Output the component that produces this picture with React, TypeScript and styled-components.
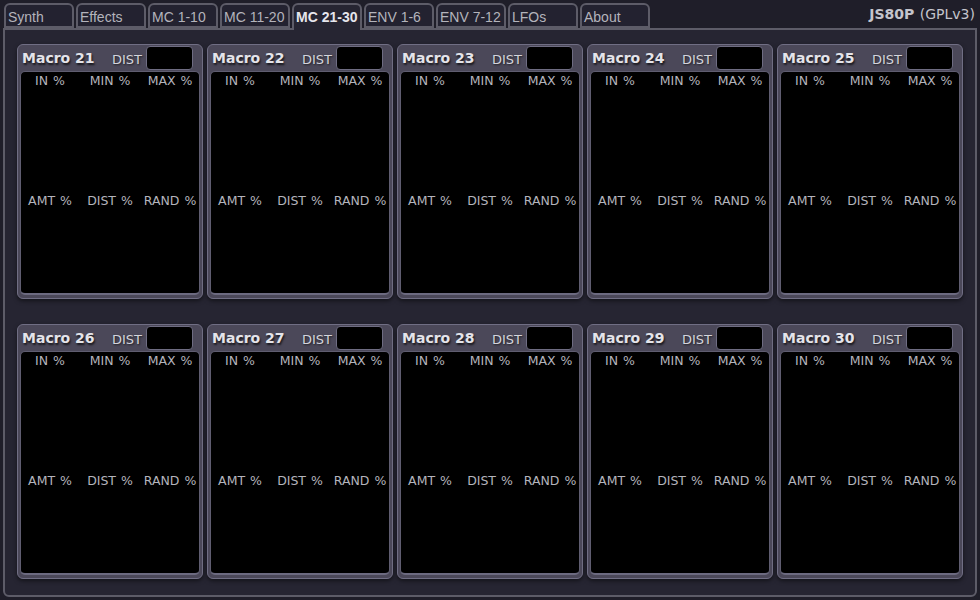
import React from "react";
import styled, { createGlobalStyle } from "styled-components";

const Global = createGlobalStyle`
  html, body { margin: 0; padding: 0; background: #1f1e29; }
  body { width: 980px; height: 600px; overflow: hidden; }
`;

const Root = styled.div`
  width: 980px;
  height: 600px;
  display: flex;
  flex-direction: column;
  background: #1f1e29;
  font-family: "DejaVu Sans", Verdana, sans-serif;
`;

const TopBar = styled.div`
  display: flex;
  align-items: flex-end;
  justify-content: space-between;
  height: 28px;
  padding: 3px 0 0 4px;
  box-sizing: border-box;
`;

const Tabs = styled.div`
  display: flex;
  gap: 2px;
  height: 25px;
`;

const Tab = styled.div<{ $active?: boolean }>`
  width: 70px;
  height: ${(p) => (p.$active ? "27px" : "25px")};
  box-sizing: border-box;
  border: 2px solid #5d5c68;
  border-bottom: ${(p) => (p.$active ? "none" : "2px solid #5d5c68")};
  border-radius: 6px 6px 0 0;
  background: ${(p) => (p.$active ? "#262532" : "#232230")};
  color: ${(p) => (p.$active ? "#e6e6ec" : "#b4b4bc")};
  font-family: "Liberation Sans", Arial, sans-serif;
  font-size: 14px;
  font-weight: ${(p) => (p.$active ? "bold" : "normal")};
  padding: 4px 0 0 2px;
  line-height: 16px;
  white-space: nowrap;
  position: relative;
  z-index: ${(p) => (p.$active ? 2 : 0)};
`;

const Brand = styled.div`
  font-family: "DejaVu Sans", Verdana, sans-serif;
  font-size: 14px;
  color: #c4c4cc;
  padding: 0 5px 0 0;
  align-self: flex-start;
  margin-top: 3px;
  word-spacing: 1px;
  b { font-weight: bold; }
`;

const Panel = styled.div`
  margin: 0 3px 3px 3px;
  flex: 1;
  border: 2px solid #5d5c68;
  border-radius: 0 0 6px 6px;
  background: #262532;
  padding: 14px 12px 0 12px;
  display: grid;
  grid-template-columns: repeat(5, 186px);
  grid-template-rows: 255px 255px;
  column-gap: 4px;
  row-gap: 25px;
  align-content: start;
`;

const Card = styled.div`
  box-sizing: border-box;
  background: #4b4859;
  border: 1px solid #706e84;
  border-radius: 6px;
  padding: 1px 2px 3px 2px;
  display: flex;
  flex-direction: column;
  box-shadow: 0 2px 4px rgba(0, 0, 0, 0.5);
`;

const Header = styled.div`
  height: 25px;
  display: flex;
  align-items: center;
  flex-shrink: 0;
`;

const Title = styled.div`
  font-family: "DejaVu Sans", Verdana, sans-serif;
  font-weight: bold;
  font-size: 14px;
  color: #e4e4ea;
  text-shadow: 1px 2px 2px rgba(0, 0, 0, 0.7);
  padding-left: 2px;
  flex: 1;
  margin-top: -1px;
`;

const DistLabel = styled.div`
  font-size: 13px;
  color: #d4d4dc;
  margin-right: 4px;
  margin-top: 2px;
  text-shadow: 1px 1px 2px rgba(0, 0, 0, 0.6);
`;

const DistBox = styled.div`
  width: 47px;
  height: 24px;
  box-sizing: border-box;
  background: #000;
  border: 1px solid #6e6c82;
  border-radius: 4px;
  margin-right: 7px;
  margin-top: -1px;
`;

const Inner = styled.div`
  flex: 1;
  background: #000;
  border: 1px solid #5f5d70;
  border-bottom: 2px solid #6c6a80;
  border-radius: 5px;
  display: grid;
  grid-template-rows: 120px 1fr;
`;

const LabelRow = styled.div`
  display: grid;
  grid-template-columns: 60px 60px 60px;
  align-items: start;
  padding-top: 2px;
  margin-left: -1px;
`;

const Label = styled.div`
  font-size: 12.5px;
  color: #b4b4bc;
  text-align: center;
  line-height: 14px;
  white-space: nowrap;
  word-spacing: 1px;
`;

const tabs = ["Synth", "Effects", "MC 1-10", "MC 11-20", "MC 21-30", "ENV 1-6", "ENV 7-12", "LFOs", "About"];

export default function App() {
  const macros = Array.from({ length: 10 }, (_, i) => 21 + i);
  return (
    <Root>
      <Global />
      <TopBar>
        <Tabs>
          {tabs.map((t) => (
            <Tab key={t} $active={t === "MC 21-30"}>
              {t}
            </Tab>
          ))}
        </Tabs>
        <Brand>
          <b>JS80P</b> (GPLv3)
        </Brand>
      </TopBar>
      <Panel>
        {macros.map((m) => (
          <Card key={m}>
            <Header>
              <Title>Macro {m}</Title>
              <DistLabel>DIST</DistLabel>
              <DistBox />
            </Header>
            <Inner>
              <LabelRow>
                <Label>IN %</Label>
                <Label>MIN %</Label>
                <Label>MAX %</Label>
              </LabelRow>
              <LabelRow>
                <Label>AMT %</Label>
                <Label>DIST %</Label>
                <Label>RAND %</Label>
              </LabelRow>
            </Inner>
          </Card>
        ))}
      </Panel>
    </Root>
  );
}
